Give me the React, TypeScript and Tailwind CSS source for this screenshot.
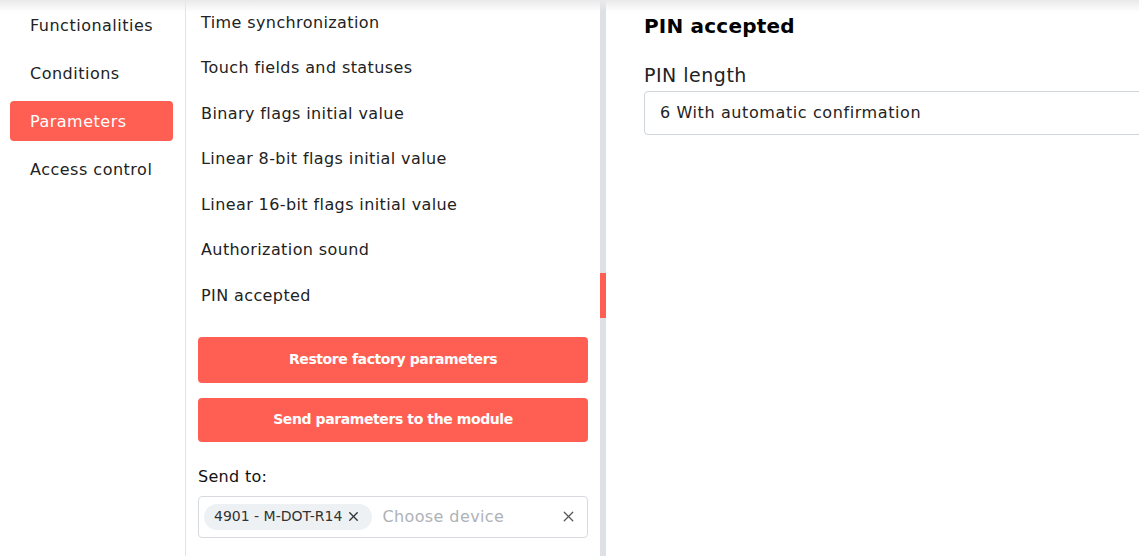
import { X } from "lucide-react";

const sections = ["Functionalities", "Conditions", "Parameters", "Access control"];

const paramItems = [
  "Time synchronization",
  "Touch fields and statuses",
  "Binary flags initial value",
  "Linear 8-bit flags initial value",
  "Linear 16-bit flags initial value",
  "Authorization sound",
  "PIN accepted",
];

const font = "[font-family:'DejaVu_Sans','Noto_Sans',sans-serif]";

export default function App() {
  return (
    <div className={`relative w-full h-[556px] flex overflow-hidden bg-white text-[#1d1d1f] ${font}`}>
      {/* header shadow from above */}
      <div className="pointer-events-none absolute top-0 left-0 right-0 h-[12px] bg-gradient-to-b from-[#e9e9e9] to-transparent z-10" />

      {/* section nav */}
      <nav className="w-[186px] shrink-0 border-r border-[#e3e3e3] pl-[10px] pr-[12px] pt-[5px] flex flex-col gap-2">
        {sections.map((s) => (
          <div
            key={s}
            className={`h-10 flex items-center pl-5 pt-[1px] rounded-[4px] text-[16px] tracking-[0.5px] ${
              s === "Parameters" ? "bg-[#ff5f52] text-white" : "text-[#222]"
            }`}
          >
            {s}
          </div>
        ))}
      </nav>

      {/* parameter list */}
      <div className="w-[414px] shrink-0 flex flex-col px-3">
        <ul className="mt-0">
          {paramItems.map((p) => (
            <li key={p} className="h-[45.5px] flex items-center pl-[3px] text-[16px] tracking-[0.4px] text-[#222]">
              {p}
            </li>
          ))}
        </ul>

        <button className="mt-[18px] h-[46px] w-[390px] rounded-[4px] bg-[#ff5f52] text-white text-[14px] tracking-[-0.4px] font-bold">
          Restore factory parameters
        </button>
        <button className="mt-[15px] h-[44px] w-[390px] rounded-[4px] bg-[#ff5f52] text-white text-[14px] tracking-[-0.4px] font-bold">
          Send parameters to the module
        </button>

        <div className="mt-[23px] text-[16px] tracking-[0.3px] text-[#111]">Send to:</div>

        <div className="mt-[7px] h-[42px] w-[390px] border border-[#d6dadf] rounded-[4px] flex items-center pl-[5px] pr-[10px]">
          <span className="h-[26px] flex items-center gap-[4px] rounded-full bg-[#eef1f4] pl-[10px] pr-[11px] text-[14px] text-[#333]">
            4901 - M-DOT-R14
            <X className="w-[15px] h-[15px] text-[#333]" strokeWidth={2.2} />
          </span>
          <span className="ml-[10px] text-[16px] tracking-[0.4px] text-[#aeb2b7] flex-1">Choose device</span>
          <X className="w-[17px] h-[17px] text-[#555]" strokeWidth={1.8} />
        </div>
      </div>

      {/* scrollbar */}
      <div className="w-[6px] shrink-0 bg-[#dde1e5] flex flex-col">
        <div className="mt-[273px] h-[45px] bg-[#ff5f52]" />
      </div>

      {/* detail panel */}
      <div className="flex-1 pl-[38px] pt-[11px] overflow-hidden">
        <h2 className="text-[20px] tracking-[0.2px] font-bold text-black">PIN accepted</h2>
        <div className="mt-[20px] text-[19px] tracking-[0.5px] text-[#222]">PIN length</div>
        <div className="mt-[1px] w-[600px] h-[44px] border border-[#d0d5da] rounded-[4px] flex items-center pl-[15px] text-[16px] tracking-[0.6px] text-[#222]">
          6 With automatic confirmation
        </div>
      </div>
    </div>
  );
}
